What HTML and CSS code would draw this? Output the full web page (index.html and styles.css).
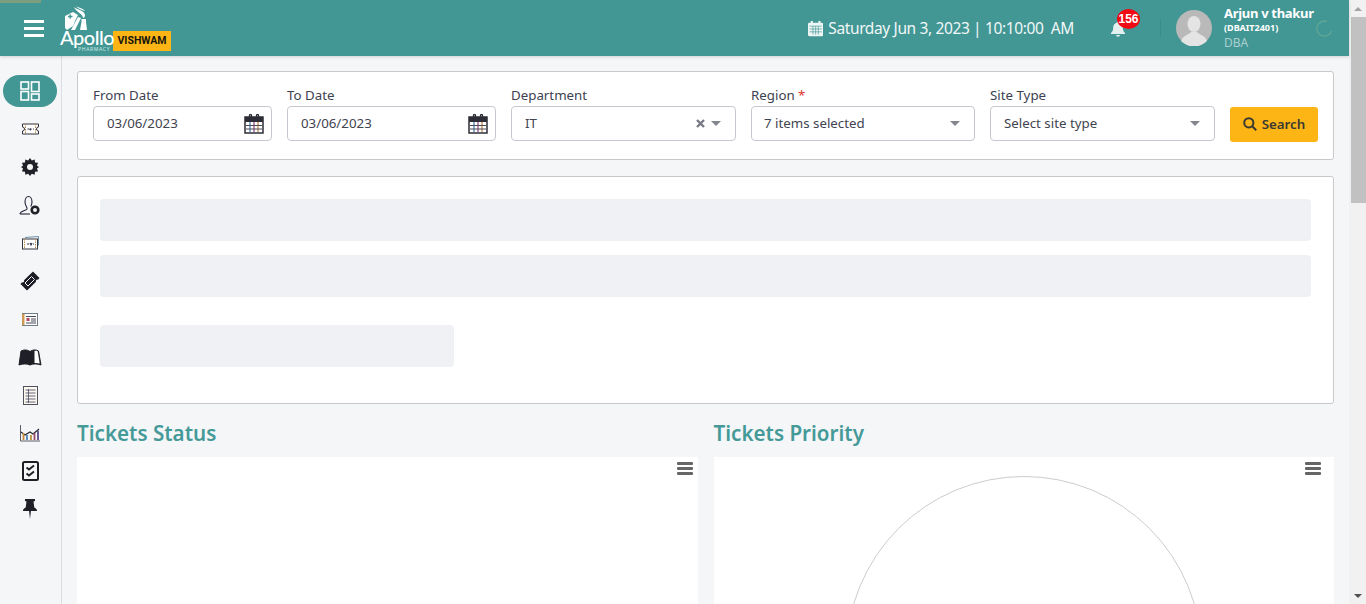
FILE: index.html
```html
<!DOCTYPE html>
<html>
<head>
  <meta charset="utf-8">
  <title>Vishwam</title>
  <link rel="stylesheet" href="styles.css">
</head>
<body>
  <div class="page">
    <div class="app">
      <header class="topbar">
        <div class="load-strip"></div>
        <div class="menu-btn"><span></span><span></span><span></span></div>
        <div class="logo">
          <div class="logo-mark">
            <svg width="24" height="26" viewBox="0 0 24 26">
              <path d="M1 10 L9 6 L14 9 L12 13 L9 20 L3 24 L1 22 Z" fill="#fff"/>
              <path d="M4 10.500h4.500M6.200 8.300v4.500" stroke="#429694" stroke-width="1.300"/>
              <path d="M14 11 L17 12 L11 24 L7 24 Z" fill="#fff"/>
              <path d="M10 1 C13 4 20 4 21 9 C21 11 20 12 19 12 C19 8 12 6 10 1 Z" fill="#fff"/>
              <path d="M12 0 C15 2 19 2 21 5 C18 4 14 3 12 0 Z" fill="#fff"/>
              <path d="M17.500 13h4.500v3l1 8h-7l1.500-8z" fill="#fff"/>
            </svg>
          </div>
          <div class="logo-name">Apollo</div>
          <div class="logo-sub">PHARMACY</div>
        </div>
        <div class="brand-tag">VISHWAM</div>

        <div class="clock">
          <svg width="16" height="17" viewBox="0 0 16 17">
            <path d="M1.500 2.500h13a1.500 1.500 0 0 1 1.500 1.500v11a1.500 1.500 0 0 1-1.500 1.500h-13a1.500 1.500 0 0 1-1.500-1.500v-11a1.500 1.500 0 0 1 1.500-1.500z" fill="#eef7f6"/>
            <path d="M4 .5v3M12 .5v3" stroke="#eef7f6" stroke-width="2.200"/>
            <path d="M1.500 6h13M1.500 9h13M1.500 12h13M5.200 6v9M8 6v9M10.800 6v9" stroke="#429694" stroke-width=".7"/>
          </svg>
          <span>Saturday Jun 3, 2023 | 10:10:00 &nbsp;AM</span>
        </div>
        <div class="bell">
          <svg width="16" height="16" viewBox="0 0 16 16">
            <path d="M8 .5c.8 0 1.300.5 1.300 1.200 2.300.6 3.500 2.500 3.500 4.800 0 3 1 4.300 2.200 5.500v1H1v-1c1.200-1.200 2.200-2.500 2.200-5.500 0-2.300 1.200-4.200 3.500-4.800C6.700 1 7.200.5 8 .5z" fill="#e2f1ef"/>
            <path d="M6 14h4a2 1.700 0 0 1-4 0z" fill="#e2f1ef"/>
          </svg>
          <span class="badge">156</span>
        </div>
        <div class="divider"></div>
        <div class="avatar">
          <svg width="36" height="36" viewBox="0 0 36 36">
            <circle cx="18" cy="18" r="18" fill="#b9b9b9"/>
            <ellipse cx="18" cy="14" rx="6.500" ry="8" fill="#e4e4e4"/>
            <path d="M5 31c2-6 8-6 10-9h6c2 3 8 3 10 9a18 18 0 0 1-26 0z" fill="#e4e4e4"/>
          </svg>
        </div>
        <div class="user">
          <div class="user-name">Arjun v thakur</div>
          <div class="user-code">(DBAIT2401)</div>
          <div class="user-role">DBA</div>
        </div>
        <svg class="spinner" width="17" height="17" viewBox="0 0 17 17">
          <path d="M11 1.500A7.500 7.500 0 1 0 15.500 11" fill="none" stroke="#5ea696" stroke-width="1.400"/>
        </svg>
      </header>

      <div class="body-row">
        <nav class="sidebar">
          <div class="nav-item"><div class="nav-pill">
            <svg width="20" height="20" viewBox="0 0 20 20" fill="none" stroke="#fff" stroke-width="1.600">
              <rect x="1" y="1" width="7.500" height="7"/><rect x="11.500" y="1" width="7.500" height="9.500"/>
              <rect x="1" y="10.500" width="7.500" height="8.500"/><rect x="11.500" y="13" width="7.500" height="6"/>
            </svg>
          </div></div>
          <div class="nav-item">
            <svg width="17" height="12" viewBox="0 0 17 12">
              <path d="M.5 1h16v3a2 2 0 0 0 0 4v3H.5V8a2 2 0 0 0 0-4z" fill="#fff" stroke="#2f2f3a"/>
              <path d="M3.500 1v10M13.500 1v10" stroke="#b98a52" stroke-dasharray="1.500 1"/>
              <path d="M5.500 6h1.500M8 5.500l1 1.500-1.500-.8h2M11 6h1" stroke="#34344a" stroke-width="1.200"/>
            </svg>
          </div>
          <div class="nav-item">
            <svg width="18" height="18" viewBox="0 0 18 18">
              <path d="M9 0l1.800 2.400 2.900-1 .3 3 3 .4-1 2.900L18 9l-2 1.500 1 2.900-3 .4-.3 3-2.900-1L9 18l-1.800-2.200-2.900 1-.3-3-3-.4 1-2.900L0 9l2-1.300-1-2.900 3-.4.300-3 2.900 1z" fill="#1f2028"/>
              <circle cx="9" cy="9" r="3" fill="#f5f6f8"/>
            </svg>
          </div>
          <div class="nav-item">
            <svg width="22" height="22" viewBox="0 0 22 22" fill="none">
              <path d="M1 20c0-3 6-3 7-5 .6-1.500-2-3-2-7 0-3 1.500-5.500 3.500-5.500S13 5 13 8c0 2-.6 3.400-1.200 4.500" stroke="#23233a" stroke-width="1.100"/>
              <path d="M1 20h10" stroke="#23233a" stroke-width="1.100"/>
              <circle cx="16" cy="16" r="3.300" stroke="#1f2028" stroke-width="2.600"/>
            </svg>
          </div>
          <div class="nav-item">
            <svg width="17" height="14" viewBox="0 0 17 14">
              <path d="M3 1.500l13.500-1v9" fill="none" stroke="#6d8fa6"/>
              <rect x=".5" y="3" width="15" height="10" fill="#fff" stroke="#33333f"/>
              <path d="M2.500 3v10M13.500 3v10" stroke="#b98a52" stroke-dasharray="1.500 1"/>
              <path d="M5 8h2M8 7l1 2 1-2M11 8h1" stroke="#34344a" stroke-width="1.200" fill="none"/>
            </svg>
          </div>
          <div class="nav-item">
            <svg width="20" height="20" viewBox="0 0 20 20">
              <path d="M13 .5l6.500 6.500-1.500 1.700a1.500 1.500 0 0 0-2 2L7 19.500.5 13l1.500-1.700a1.500 1.500 0 0 0 2-2z" fill="#1b1c24"/>
              <path d="M11.500 5.500l3 3-6.500 6.500-3-3z" fill="none" stroke="#f5f6f8" stroke-width="1"/>
            </svg>
          </div>
          <div class="nav-item">
            <svg width="16" height="13" viewBox="0 0 16 13">
              <rect x=".5" y=".5" width="15" height="12" fill="#fff" stroke="#6f7c8a"/>
              <rect x="0" y="1" width="2.500" height="11" fill="#d09a55"/>
              <path d="M4 3.500h10M9 6h5M9 8h5M4 10h10" stroke="#4a4a5a"/>
              <rect x="4.500" y="5" width="3" height="3" fill="#b2465f"/>
            </svg>
          </div>
          <div class="nav-item">
            <svg width="24" height="17" viewBox="0 0 24 17">
              <path d="M1 16L3 2c3-1.500 6-1.500 9 .5v13.500c-3-1.500-7-1.500-11 0z" fill="#1e1f27" stroke="#1e1f27"/>
              <path d="M12 2.500c3-2 6-2 8.500-.5L23 16c-4-1.500-8-1.500-11 0z" fill="#1e1f27" stroke="#1e1f27"/>
              <path d="M16.500 2c1-.3 2.500-.3 3.200.3l2 12.200c-1.500-.5-3.500-.7-5.200-.6z" fill="#fff"/>
            </svg>
          </div>
          <div class="nav-item">
            <svg width="15" height="19" viewBox="0 0 15 19">
              <rect x=".5" y=".5" width="14" height="18" fill="#fbf8f2" stroke="#50505c"/>
              <path d="M2.500 4h10M2.500 7h10M2.500 10h10M2.500 13h10M2.500 16h10M5.500 3v14" stroke="#55556a" stroke-width=".9"/>
            </svg>
          </div>
          <div class="nav-item">
            <svg width="20" height="18" viewBox="0 0 20 18" fill="none">
              <path d="M.5 1v16h19.500" stroke="#5d5d66"/>
              <path d="M1 8l4 3 5-3 3 2 6-5" stroke="#25252c" stroke-width="1.100"/>
              <path d="M3.500 9v7" stroke="#c98a3c" stroke-width="1.800"/>
              <path d="M7 11v5" stroke="#4c86b8" stroke-width="1.800"/>
              <path d="M11 11v5" stroke="#b9913c" stroke-width="1.800"/>
              <path d="M14.500 9v7" stroke="#9a4c6a" stroke-width="1.800"/>
              <path d="M18 6.500v9.500" stroke="#5a4a86" stroke-width="1.800"/>
            </svg>
          </div>
          <div class="nav-item">
            <svg width="17" height="20" viewBox="0 0 17 20" fill="none">
              <rect x="1" y="1" width="15" height="18" rx="1.500" stroke="#1c1d25" stroke-width="2"/>
              <path d="M4.500 6.500l2.500 2 5-4M4.500 12.500l2.500 2 5-4" stroke="#1c1d25" stroke-width="1.900"/>
            </svg>
          </div>
          <div class="nav-item">
            <svg width="14" height="20" viewBox="0 0 14 20">
              <path d="M2 0h10v2l-1.500.5.800 6c1.500.6 2.700 1.900 2.700 3.500H0c0-1.600 1.200-2.900 2.700-3.500l.8-6L2 2z" fill="#1e1f27"/>
              <path d="M6 12h2l-1 8z" fill="#2c2d38"/>
            </svg>
          </div>
        </nav>

        <main class="content">
          <section class="filter-card">
            <div class="field field-from">
              <label class="field-label">From Date</label>
              <div class="control"><span>03/06/2023</span>
                <svg class="cal-icon" width="20" height="20" viewBox="0 0 20 20" fill="none">
                  <rect x="1" y="3" width="18" height="5" fill="#2d2d38"/>
                  <rect x="1" y="3" width="18" height="16" stroke="#2d2d38" stroke-width="1.500"/>
                  <path d="M5.500 4V1.500a1 1 0 0 1 2 0V4M12.500 4V1.500a1 1 0 0 1 2 0V4" stroke="#2d2d38" stroke-width="1.300"/>
                  <path d="M6 8v10" stroke="#3f78a8" stroke-width="1.200"/><path d="M10 8v10" stroke="#8c3f78" stroke-width="1.200"/><path d="M14 8v10" stroke="#b9803c" stroke-width="1.200"/>
                  <path d="M2 11.500h16M2 15h16" stroke="#4c4c58"/>
                </svg>
              </div>
            </div>
            <div class="field field-to">
              <label class="field-label">To Date</label>
              <div class="control"><span>03/06/2023</span>
                <svg class="cal-icon" width="20" height="20" viewBox="0 0 20 20" fill="none">
                  <rect x="1" y="3" width="18" height="5" fill="#2d2d38"/>
                  <rect x="1" y="3" width="18" height="16" stroke="#2d2d38" stroke-width="1.500"/>
                  <path d="M5.500 4V1.500a1 1 0 0 1 2 0V4M12.500 4V1.500a1 1 0 0 1 2 0V4" stroke="#2d2d38" stroke-width="1.300"/>
                  <path d="M6 8v10" stroke="#3f78a8" stroke-width="1.200"/><path d="M10 8v10" stroke="#8c3f78" stroke-width="1.200"/><path d="M14 8v10" stroke="#b9803c" stroke-width="1.200"/>
                  <path d="M2 11.500h16M2 15h16" stroke="#4c4c58"/>
                </svg>
              </div>
            </div>
            <div class="field field-dept">
              <label class="field-label">Department</label>
              <div class="control"><span>IT</span>
                <svg class="clear" width="9" height="9" viewBox="0 0 9 9" stroke="#777a85" stroke-width="2.400"><path d="M1 1l7 7M8 1l-7 7"/></svg>
                <i class="caret"></i>
              </div>
            </div>
            <div class="field field-region">
              <label class="field-label">Region <b class="req">*</b></label>
              <div class="control"><span>7 items selected</span><i class="caret"></i></div>
            </div>
            <div class="field field-site">
              <label class="field-label">Site Type</label>
              <div class="control"><span>Select site type</span><i class="caret"></i></div>
            </div>
            <button class="search-btn">
              <svg width="14" height="14" viewBox="0 0 14 14" fill="none" stroke="#3a3934" stroke-width="2">
                <circle cx="5.800" cy="5.800" r="4.600"/><path d="M9.200 9.200l4 4"/>
              </svg>
              <span>Search</span>
            </button>
          </section>

          <section class="skeleton-card">
            <div class="skeleton"></div>
            <div class="skeleton"></div>
            <div class="skeleton skeleton-short"></div>
          </section>

          <section class="charts">
            <div class="chart-col">
              <h2 class="chart-title">Tickets Status</h2>
              <div class="chart-panel">
                <div class="chart-menu"><span></span><span></span><span></span></div>
              </div>
            </div>
            <div class="chart-col">
              <h2 class="chart-title">Tickets Priority</h2>
              <div class="chart-panel">
                <div class="chart-menu chart-menu-inset"><span></span><span></span><span></span></div>
                <div class="pie"></div>
              </div>
            </div>
          </section>
        </main>
      </div>
    </div>

    <div class="scrollbar">
      <div class="scroll-btn"><i class="arrow-up"></i></div>
      <div class="scroll-track"><div class="scroll-thumb"></div></div>
      <div class="scroll-btn"><i class="arrow-down"></i></div>
    </div>
  </div>
</body>
</html>
```

FILE: styles.css
```css
* {
  box-sizing: border-box;
}

html, body {
  margin: 0;
  height: 100%;
  overflow: hidden;
}

body {
  font-family: "Noto Sans", "Open Sans", sans-serif;
  font-size: 13.3px;
  color: #3b3f4a;
  background-color: #f5f6f8;
}

.page {
  display: flex;
  height: 100vh;
}

.app {
  flex: 1;
  min-width: 0;
  display: flex;
  flex-direction: column;
}

/* top bar */
.topbar {
  position: relative;
  flex: none;
  height: 56px;
  display: flex;
  align-items: center;
  background-color: #429694;
  color: #fff;
  box-shadow: 0 1px 3px rgba(0, 0, 0, 0.15);
  z-index: 2;
}

.topbar > * {
  flex: none;
}

.load-strip {
  position: absolute;
  left: 0;
  top: 0;
  width: 41px;
  height: 3px;
  background-color: #7d9f80;
}

.menu-btn {
  display: flex;
  flex-direction: column;
  gap: 4px;
  width: 20px;
  margin-left: 24px;
}

.menu-btn span {
  height: 3px;
  background-color: #fff;
}

.logo {
  position: relative;
  width: 53px;
  height: 48px;
  margin-left: 16px;
}

.logo-mark {
  position: absolute;
  left: 4px;
  top: 2px;
  line-height: 0;
}

.logo-name {
  position: absolute;
  left: 0;
  top: 24px;
  font-family: "Lato", sans-serif;
  font-size: 20px;
  font-weight: 500;
  line-height: 18px;
  letter-spacing: -0.5px;
  color: #fff;
}

.logo-sub {
  position: absolute;
  left: 18px;
  top: 42px;
  font-size: 5px;
  line-height: 6px;
  letter-spacing: 0.7px;
  color: #d7ecea;
}

.brand-tag {
  width: 58px;
  height: 20px;
  margin-top: 25px;
  background-color: #fdb515;
  color: #17170f;
  font-family: "Roboto", sans-serif;
  font-size: 10.5px;
  font-weight: 700;
  line-height: 20px;
  text-align: center;
}

.clock {
  display: flex;
  align-items: center;
  gap: 5px;
  width: 266px;
  margin-left: 637px;
  font-size: 15.5px;
  letter-spacing: -0.37px;
  white-space: nowrap;
  color: #f1f8f7;
}

.bell {
  position: relative;
  margin-left: 36px;
  line-height: 0;
  margin-top: 2px;
}

.badge {
  position: absolute;
  left: 7px;
  top: -12px;
  width: 23px;
  height: 20px;
  border-radius: 50%;
  background-color: #f00a14;
  color: #fff;
  font-family: "Liberation Sans", sans-serif;
  font-size: 12px;
  font-weight: bold;
  line-height: 20px;
  text-align: center;
}

.divider {
  width: 1px;
  height: 16px;
  margin-left: 34px;
  background-color: #3b8b89;
}

.avatar {
  margin-left: 15px;
  line-height: 0;
}

.user {
  margin-left: 12px;
  width: 92px;
  white-space: nowrap;
}

.user-name {
  font-size: 13px;
  font-weight: 700;
  line-height: 16px;
  letter-spacing: -0.3px;
}

.user-code {
  font-size: 9px;
  font-weight: 700;
  line-height: 14px;
}

.user-role {
  font-size: 12px;
  line-height: 16px;
  color: #a8d0ce;
}

/* side nav */
.body-row {
  flex: 1;
  min-height: 0;
  display: flex;
}

.sidebar {
  flex: none;
  width: 62px;
  padding-top: 16px;
  border-right: 1px solid #dcdde0;
}

.nav-item {
  height: 38px;
  display: flex;
  align-items: center;
  justify-content: center;
  padding-right: 1px;
}

.nav-pill {
  width: 54px;
  height: 32px;
  display: flex;
  align-items: center;
  justify-content: center;
  border-radius: 16px;
  background-color: #429694;
}

/* main */
.content {
  flex: 1;
  min-width: 0;
  overflow: hidden;
  padding: 15px 15px 0;
}

.filter-card {
  height: 89px;
  display: flex;
  gap: 15px;
  padding: 13px 15px 0;
  background-color: #fff;
  border: 1px solid #c9c9cc;
  border-radius: 3px;
}

.field-from { width: 179px; }
.field-to { width: 209px; }
.field-dept { width: 225px; }
.field-region { width: 224px; }
.field-site { width: 225px; }

.field-label {
  display: block;
  height: 21px;
  line-height: 20px;
  color: #3d4250;
}

.req {
  font-weight: normal;
  color: #e0342c;
}

.control {
  height: 35px;
  display: flex;
  align-items: center;
  gap: 8px;
  padding: 0 10px 2px 13px;
  border: 1px solid #c8c7d0;
  border-radius: 4px;
  color: #3f4450;
}

.field-region .control {
  padding-left: 12px;
}

.control span:first-child {
  flex: 1;
}

.cal-icon {
  margin: 2px -3px 0 0;
}

.clear {
  margin: 2px -2px 0 0;
}

.caret {
  width: 0;
  height: 0;
  margin-top: 2px;
  margin-right: 4px;
  border-left: 5px solid transparent;
  border-right: 5px solid transparent;
  border-top: 5px solid #83858f;
}

.search-btn {
  align-self: flex-start;
  width: 88px;
  height: 35px;
  margin-top: 22px;
  display: flex;
  align-items: center;
  justify-content: center;
  gap: 5px;
  padding: 0 0 2px;
  border: 0;
  border-radius: 3px;
  background-color: #fdb515;
  color: #3a3934;
  font-family: inherit;
  font-size: 13.3px;
  font-weight: 600;
}

.search-btn svg {
  margin-top: 1px;
}

.skeleton-card {
  height: 228px;
  margin-top: 16px;
  padding: 22px 22px 0;
  background-color: #fff;
  border: 1px solid #c9c9cc;
  border-radius: 3px;
}

.skeleton {
  height: 42px;
  margin-bottom: 14px;
  border-radius: 4px;
  background-color: #f0f1f5;
}

.skeleton-short {
  width: 354px;
  margin-top: 28px;
  margin-bottom: 0;
}

.charts {
  display: grid;
  grid-template-columns: 1fr 1fr;
  gap: 16px;
}

.chart-title {
  height: 53px;
  margin: 0;
  padding-top: 13px;
  font-size: 20.6px;
  font-weight: 600;
  line-height: 32px;
  color: #459a98;
}

.chart-panel {
  position: relative;
  height: 360px;
  overflow: hidden;
  background-color: #fff;
}

.chart-menu {
  position: absolute;
  right: 5px;
  top: 5px;
  width: 16px;
  display: flex;
  flex-direction: column;
  gap: 2px;
}

.chart-menu-inset {
  right: 13px;
}

.chart-menu span {
  height: 3px;
  border-radius: 1px;
  background-color: #666;
}

.pie {
  width: 356px;
  height: 356px;
  margin: 19px auto 0;
  border: 1px solid #ccc;
  border-radius: 50%;
}

/* scrollbar */
.scrollbar {
  flex: none;
  width: 17px;
  display: flex;
  flex-direction: column;
  background-color: #f1f1f1;
}

.scroll-btn {
  flex: none;
  height: 17px;
  display: flex;
  align-items: center;
  justify-content: center;
}

.arrow-up {
  border-left: 4px solid transparent;
  border-right: 4px solid transparent;
  border-bottom: 4px solid #a3a3a3;
}

.arrow-down {
  border-left: 4px solid transparent;
  border-right: 4px solid transparent;
  border-top: 4px solid #505050;
}

.scroll-track {
  flex: 1;
}

.scroll-thumb {
  height: 186px;
  margin-left: 2px;
  background-color: #c1c1c1;
}
```
